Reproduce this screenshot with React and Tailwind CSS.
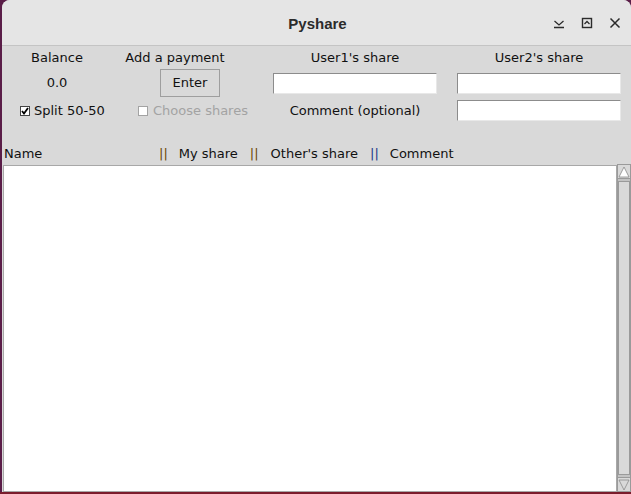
import React from 'react';

function Check({ checked, disabled }) {
  return (
    <span
      className={`shrink-0 inline-flex items-center justify-center w-[10px] h-[10px] bg-white border ${disabled ? 'border-[#a3a3a3]' : 'border-[#444]'}`}
    >
      {checked && (
        <svg width="8" height="8" viewBox="0 0 8 8">
          <path d="M1 4 L3 6.5 L7 1" stroke="#000" strokeWidth="1.8" fill="none" />
        </svg>
      )}
    </span>
  );
}

function Entry() {
  return (
    <div className="w-[164px] h-[21px] bg-white border border-t-[#8c8c8c] border-l-[#8c8c8c] border-r-[#e8e8e8] border-b-[#e8e8e8]" />
  );
}

export default function App() {
  return (
    <div className="w-[631px] h-[494px] bg-[#5a1d48] relative overflow-hidden" style={{ fontFamily: '"DejaVu Sans", sans-serif' }}>
      <div className="absolute left-[2px] top-0 right-0 bottom-[2px] flex flex-col rounded-tl-[8px] rounded-tr-[8px] overflow-hidden bg-[#d9d9d9]">
        {/* title bar */}
        <div className="h-[46px] shrink-0 bg-[#e5e5e5] border-b border-[#c4c4c4] flex items-center justify-center relative">
          <div className="text-[15px] font-bold text-[#2b2b2b] mt-[3px] ml-[2px]" style={{ fontFamily: '"Liberation Sans", sans-serif' }}>
            Pyshare
          </div>
          <div className="absolute right-[9px] top-[16px] flex items-center gap-[14px]">
            <svg width="14" height="14" viewBox="0 0 14 14">
              <path d="M2.5 5 L7 9 L11.5 5 M2 11.5 H12" stroke="#2b2b2b" strokeWidth="1.3" fill="none" />
            </svg>
            <svg width="14" height="14" viewBox="0 0 14 14">
              <rect x="2.5" y="2.5" width="9" height="9" stroke="#2b2b2b" strokeWidth="1.4" fill="none" />
              <path d="M4.5 8 L7 5.5 L9.5 8" stroke="#2b2b2b" strokeWidth="1.3" fill="none" />
            </svg>
            <svg width="14" height="14" viewBox="0 0 14 14">
              <path d="M2.5 2.5 L11.5 11.5 M11.5 2.5 L2.5 11.5" stroke="#2b2b2b" strokeWidth="1.5" fill="none" />
            </svg>
          </div>
        </div>

        {/* controls */}
        <div className="grid grid-cols-[110px_126px_219px_164px] grid-rows-[22px_30px_25px] text-[13px] text-[#111] whitespace-nowrap">
          <div className="flex items-center justify-center pt-[1px]">Balance</div>
          <div className="flex items-center justify-center pt-[1px]">Add a payment</div>
          <div className="flex items-center justify-center pl-[15px] pt-[1px]">User1's share</div>
          <div className="flex items-center justify-center pt-[1px]">User2's share</div>

          <div className="flex items-center justify-center">0.0</div>
          <div className="flex items-center pl-[48px]">
            <div className="w-[60px] h-[28px] flex items-center justify-center bg-[#d9d9d9] border border-[#9e9e9e]">Enter</div>
          </div>
          <div className="flex items-center justify-center pl-[15px]"><Entry /></div>
          <div className="flex items-center justify-center"><Entry /></div>

          <div className="flex items-center pl-[18px] gap-[4px]">
            <Check checked />
            <span>Split 50-50</span>
          </div>
          <div className="flex items-center pl-[26px] gap-[5px] text-[#a3a3a3]">
            <Check disabled />
            <span>Choose shares</span>
          </div>
          <div className="flex items-center justify-center pl-[15px]">Comment (optional)</div>
          <div className="flex items-center justify-center"><Entry /></div>
        </div>

        {/* header */}
        <div className="mt-[20px] h-[21px] flex items-center text-[13px] text-[#111] pl-[2px] whitespace-pre">
          <span className="w-[155px]">Name</span>
          <span className="text-[#6b4600]">||</span>
          <span className="ml-[11px]">My share</span>
          <span className="ml-[12px] text-[#6b4600]">||</span>
          <span className="ml-[12px]">Other's share</span>
          <span className="ml-[12px] text-[#1d3a88]">||</span>
          <span className="ml-[11px]">Comment</span>
        </div>

        {/* list + scrollbar */}
        <div className="flex-1 flex pl-[1px]">
          <div className="flex-1 bg-white border border-[#a8a8a8] mt-[1px]" />
          <div className="w-[14px] bg-[#c3c3c3] border border-[#9a9a9a] flex flex-col">
            <div className="h-[14px] bg-[#d9d9d9] border-b border-[#9a9a9a] flex items-center justify-center">
              <svg width="12" height="12" viewBox="0 0 12 12">
                <path d="M6 1 L11 11 H1 Z" fill="#ffffff" stroke="#8a8a8a" strokeWidth="0.8" />
              </svg>
            </div>
            <div className="flex-1 bg-[#d9d9d9] mt-[2px] mb-[2px] border border-[#9a9a9a]" />
            <div className="h-[14px] bg-[#d9d9d9] border-t border-[#9a9a9a] flex items-center justify-center">
              <svg width="12" height="12" viewBox="0 0 12 12">
                <path d="M1 1 H11 L6 11 Z" fill="#d9d9d9" stroke="#8a8a8a" strokeWidth="0.8" />
              </svg>
            </div>
          </div>
        </div>
      </div>
      <div className="absolute left-0 right-0 bottom-0 h-[2px] bg-[#7b1c2c]" />
    </div>
  );
}
